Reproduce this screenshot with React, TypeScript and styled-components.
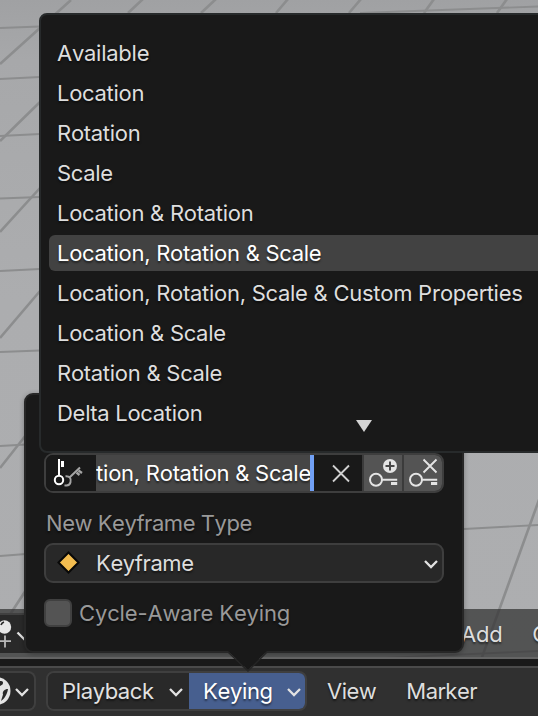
import React from "react";
import styled, { createGlobalStyle, css } from "styled-components";

const Global = createGlobalStyle`
  * { box-sizing: border-box; }
  body { margin: 0; overflow: hidden; font-family: Inter, "Liberation Sans", sans-serif; }
`;

const Screen = styled.main`
  position: relative;
  width: 538px;
  height: 716px;
  overflow: hidden;
  display: flex;
  flex-direction: column;
  background: #303030;
  font-size: 22px;
  line-height: 26px;
  letter-spacing: -0.26px;
  font-kerning: none;
  color: #dedede;
  white-space: nowrap;
  text-shadow: 0 2px 2px rgba(0, 0, 0, 0.5);
`;

const Viewport = styled.section`
  position: relative;
  height: 659px;
  flex: none;
  display: flex;
  flex-direction: column;
  justify-content: flex-end;
  overflow: hidden;
  background: linear-gradient(#a0a1a3 0, #a7a8aa 60px, #acadaf 300px, #adaeb0);
`;

const FloorGrid = styled.svg`
  position: absolute;
  inset: 0;
`;

const ViewportHeader = styled.header`
  position: relative;
  height: 50px;
  background: rgba(54, 54, 54, 0.75);
  border-bottom: 2px solid #656565;
  display: flex;
  align-items: center;
`;

const SnapButton = styled.div`
  width: 40px;
  height: 40px;
  flex: none;
  background: #292929;
  border-top: 2px solid #404040;
  svg { display: block; margin-top: -2px; }
`;

const HeaderMenus = styled.nav`
  display: flex;
  gap: 30px;
  margin: 2px 0 0 421px;
`;

const TimelineHeader = styled.footer`
  flex: 1;
  margin-top: 7px;
  border-top: 2px solid #4a4a4a;
  background: #303030;
  box-shadow: 0 -7px #191919;
  display: flex;
  align-items: flex-start;
  padding-top: 3px;
`;

const headerButton = css`
  height: 40px;
  display: flex;
  align-items: center;
  justify-content: space-between;
`;

const EditorButton = styled.div`
  ${headerButton}
  width: 36px;
  flex: none;
  padding-right: 3px;
  background: #292929;
  border: 2px solid #3f3f3f;
  border-left: 0;
  border-radius: 0 8px 8px 0;
  svg { flex: none; }
`;

const MenuGroup = styled.div`
  display: flex;
  margin-left: 10px;
  border: 2px solid #3f3f3f;
  border-radius: 8px;
  overflow: hidden;
  height: 40px;
`;

const MenuButton = styled.div<{ $active?: boolean; $width: number }>`
  ${headerButton}
  height: 36px;
  width: ${(p) => p.$width}px;
  padding: 0 ${(p) => (p.$active ? 2 : 4)}px 0 14px;
  letter-spacing: -0.35px;
  color: ${(p) => (p.$active ? "#fff" : "#e2e2e2")};
  background: ${(p) => (p.$active ? "#475f8f" : "#292929")};
`;

const MenuLabel = styled.span<{ $left: number }>`
  margin: 7px 0 0 ${(p) => p.$left}px;
  letter-spacing: -0.5px;
`;

const Popover = styled.section`
  position: absolute;
  left: 24px;
  top: 393px;
  width: 440px;
  height: 260px;
  padding: 58px 18px 0;
  border: 2px solid #272727;
  border-radius: 9px;
  background: #191919;
  box-shadow: 0 1px 5px rgba(0, 0, 0, 0.3);
`;

const PopoverArrow = styled.svg`
  position: absolute;
  left: 202px;
  top: 256px;
`;

const KeyingSetRow = styled.div`
  display: flex;
  height: 40px;
  width: 400px;
  border: 2px solid #3e3e3e;
  border-radius: 9px;
  overflow: hidden;
`;

const IconSlot = styled.div<{ $width: number; $raised?: boolean }>`
  width: ${(p) => p.$width}px;
  flex: none;
  background: ${(p) => (p.$raised ? "#545454" : "#191919")};
  border-left: ${(p) => (p.$raised ? "2px solid #3b3b3b" : "0")};
  svg { display: block; }
`;

const TextInput = styled.div`
  width: 218px;
  height: 36px;
  flex: none;
  overflow: hidden;
  display: flex;
  justify-content: flex-end;
  align-items: center;
  color: #fff;
  background: #464646;
  border-right: 4px solid #71a0f5;
  span { margin-right: -1px; }
`;

const SectionLabel = styled.div`
  margin: 17px 0 7px 2px;
  letter-spacing: -0.45px;
  color: #999;
`;

const Dropdown = styled.div`
  display: flex;
  align-items: center;
  width: 400px;
  height: 40px;
  border: 2px solid #3e3e3e;
  border-radius: 9px;
  background: #282828;
  padding: 0 2px 0 10px;
  letter-spacing: -0.4px;
  span { flex: 1; margin-left: 14px; }
`;

const CheckRow = styled.label`
  display: flex;
  align-items: center;
  gap: 7px;
  margin-top: 16px;
  letter-spacing: -0.15px;
  color: #999;
`;

const Checkbox = styled.i`
  width: 28px;
  height: 28px;
  border: 2px solid #404040;
  border-radius: 6px;
  background: #545454;
`;

const SearchMenu = styled.section`
  position: absolute;
  left: 39px;
  top: 13px;
  width: 650px;
  height: 440px;
  padding: 20px 8px 0;
  border: 2px solid #272a2b;
  border-radius: 8px;
  background: #191919;
`;

const SearchItem = styled.div<{ $selected?: boolean }>`
  height: 36px;
  margin-bottom: 4px;
  padding: 5px 8px;
  border-radius: 6px;
  color: ${(p) => (p.$selected ? "#fff" : "#dedede")};
  background: ${(p) => (p.$selected ? "#424242" : "transparent")};
`;

const MoreArrow = styled.svg`
  position: absolute;
  left: 314px;
  bottom: 18px;
`;

const Chevron = () => (
  <svg width="18" height="18" viewBox="0 0 18 18" fill="none" stroke="#e2e2e2" strokeWidth="2.3">
    <path d="M3 7 9 13 15 7" />
  </svg>
);

const Key = () => (
  <g>
    <circle cx="12" cy="24.8" r="6" fill="none" stroke="#e4e4e4" strokeWidth="2" />
    <path d="M18.2 24.8H33.2" stroke="#e4e4e4" strokeWidth="2" />
    <path d="M27 27h6.2v3H27z" fill="#e4e4e4" />
  </g>
);

const CROSS_LINES =
  "M0 28 40 26.5M0 79 40 77M0 136 40 134M0 198.5 40 197M0 271 40 269M0 352 40 350.5M0 446 26 444.5M0 556 26 554M360 13 538 6.5M464 529 538 525M340 660 538 651";
const DEPTH_LINES =
  "M0 64 71 0M128 13 143 -1M201 13 216 -1M276 13 288 -1M349 13 361 -1M424 13 434 -1M497 13 507 -1M0 141 40 102M0 232 40 188M0 338 40 291M0 468 26 435M0 630 26 590M540 497 481 660";

const ITEMS = [
  "Available", "Location", "Rotation", "Scale", "Location & Rotation",
  "Location, Rotation & Scale", "Location, Rotation, Scale & Custom Properties",
  "Location & Scale", "Rotation & Scale", "Delta Location",
];

export default function App() {
  return (
    <Screen>
      <Global />
      <Viewport>
        <FloorGrid width="538" height="659" fill="none" stroke="#8c8d8e">
          <path d={CROSS_LINES} strokeWidth="1.8" />
          <path d={DEPTH_LINES} strokeWidth="2.6" />
        </FloorGrid>
        <ViewportHeader>
          <SnapButton>
            <svg width="40" height="40" viewBox="0 0 40 40">
              <circle cx="4.500" cy="14" r="6.700" fill="#e6e6e6" />
              <path d="M1 12a5 5 0 0 1 3-3" stroke="#292929" strokeWidth="1.700" fill="none" />
              <path d="M0 28.200h11M5 22.500v12" stroke="#b8b8b8" strokeWidth="1.800" />
              <path d="m17.500 19.500 8 8" stroke="#e2e2e2" strokeWidth="2.300" />
            </svg>
          </SnapButton>
          <HeaderMenus><span>Add</span><span>Object</span></HeaderMenus>
        </ViewportHeader>
      </Viewport>
      <TimelineHeader>
        <EditorButton>
          <svg width="11" height="30" viewBox="0 0 11 30">
            <circle cx="-3.500" cy="15" r="14" fill="#e4e4e4" />
            <path d="M0 5c2.500-.5 4 1 2.500 3.500L0 10zM8 13c-3.500 0-6 2.500-5 5.500L1 25c3.500-2.500 6-6 7-12z" fill="#292929" />
          </svg>
          <Chevron />
        </EditorButton>
        <MenuGroup>
          <MenuButton $width={141}>Playback<Chevron /></MenuButton>
          <MenuButton $width={116} $active>Keying<Chevron /></MenuButton>
        </MenuGroup>
        <MenuLabel $left={20}>View</MenuLabel>
        <MenuLabel $left={30}>Marker</MenuLabel>
      </TimelineHeader>
      <Popover>
        <KeyingSetRow>
          <IconSlot $width={50}>
            <svg width="50" height="36" viewBox="0 0 50 36" fill="none">
              <circle cx="13" cy="25" r="4.200" stroke="#fff" strokeWidth="2" />
              <path d="M13 21V4" stroke="#fff" strokeWidth="2" />
              <path d="M15 6h3v6h-3z" fill="#fff" />
              <path d="M19.500 21.300c4-.3 6 2 5 6-.6 2.500-3 3.700-6 3M24 22l10-9.500" stroke="#a4a4a4" strokeWidth="2" />
              <path d="m30.500 17.500 3 2.500M32.500 15.500l3.500 2.500" stroke="#a4a4a4" strokeWidth="2.300" />
            </svg>
          </IconSlot>
          <TextInput><span>Location, Rotation &amp; Scale</span></TextInput>
          <IconSlot $width={48}>
            <svg width="48" height="36" viewBox="0 0 48 36">
              <path d="m19 10.500 16 16M35 10.500l-16 16" stroke="#d0d0d0" strokeWidth="1.800" />
            </svg>
          </IconSlot>
          <IconSlot $width={40} $raised>
            <svg width="38" height="36" viewBox="0 0 38 36">
              <Key />
              <circle cx="26" cy="11" r="7" fill="#e4e4e4" />
              <path d="M21.500 11h9M26 6.500v9" stroke="#484848" strokeWidth="2" />
            </svg>
          </IconSlot>
          <IconSlot $width={40} $raised>
            <svg width="38" height="36" viewBox="0 0 38 36">
              <Key />
              <path d="m19.500 4.500 13 13M32.500 4.500l-13 13" stroke="#e4e4e4" strokeWidth="1.900" />
            </svg>
          </IconSlot>
        </KeyingSetRow>
        <SectionLabel>New Keyframe Type</SectionLabel>
        <Dropdown>
          <svg width="26" height="26" viewBox="0 0 26 26">
            <path d="m12.500 2.500 10 10-10 10-10-10z" fill="#f3bd50" stroke="#080808" strokeWidth="2" />
          </svg>
          <span>Keyframe</span>
          <Chevron />
        </Dropdown>
        <CheckRow><Checkbox />Cycle-Aware Keying</CheckRow>
        <PopoverArrow width="40" height="22" viewBox="0 0 40 22">
          <path d="M0 0h39L20 19z" fill="#191919" />
          <path d="M0 1 20 20 39 1" stroke="#252525" strokeWidth="1.500" fill="none" />
        </PopoverArrow>
      </Popover>
      <SearchMenu>
        {ITEMS.map((item) => (
          <SearchItem key={item} $selected={item === "Location, Rotation & Scale"}>{item}</SearchItem>
        ))}
        <MoreArrow width="18" height="14" viewBox="0 0 18 14">
          <path d="M1 1h16L9 13z" fill="#d4d4d4" />
        </MoreArrow>
      </SearchMenu>
    </Screen>
  );
}
